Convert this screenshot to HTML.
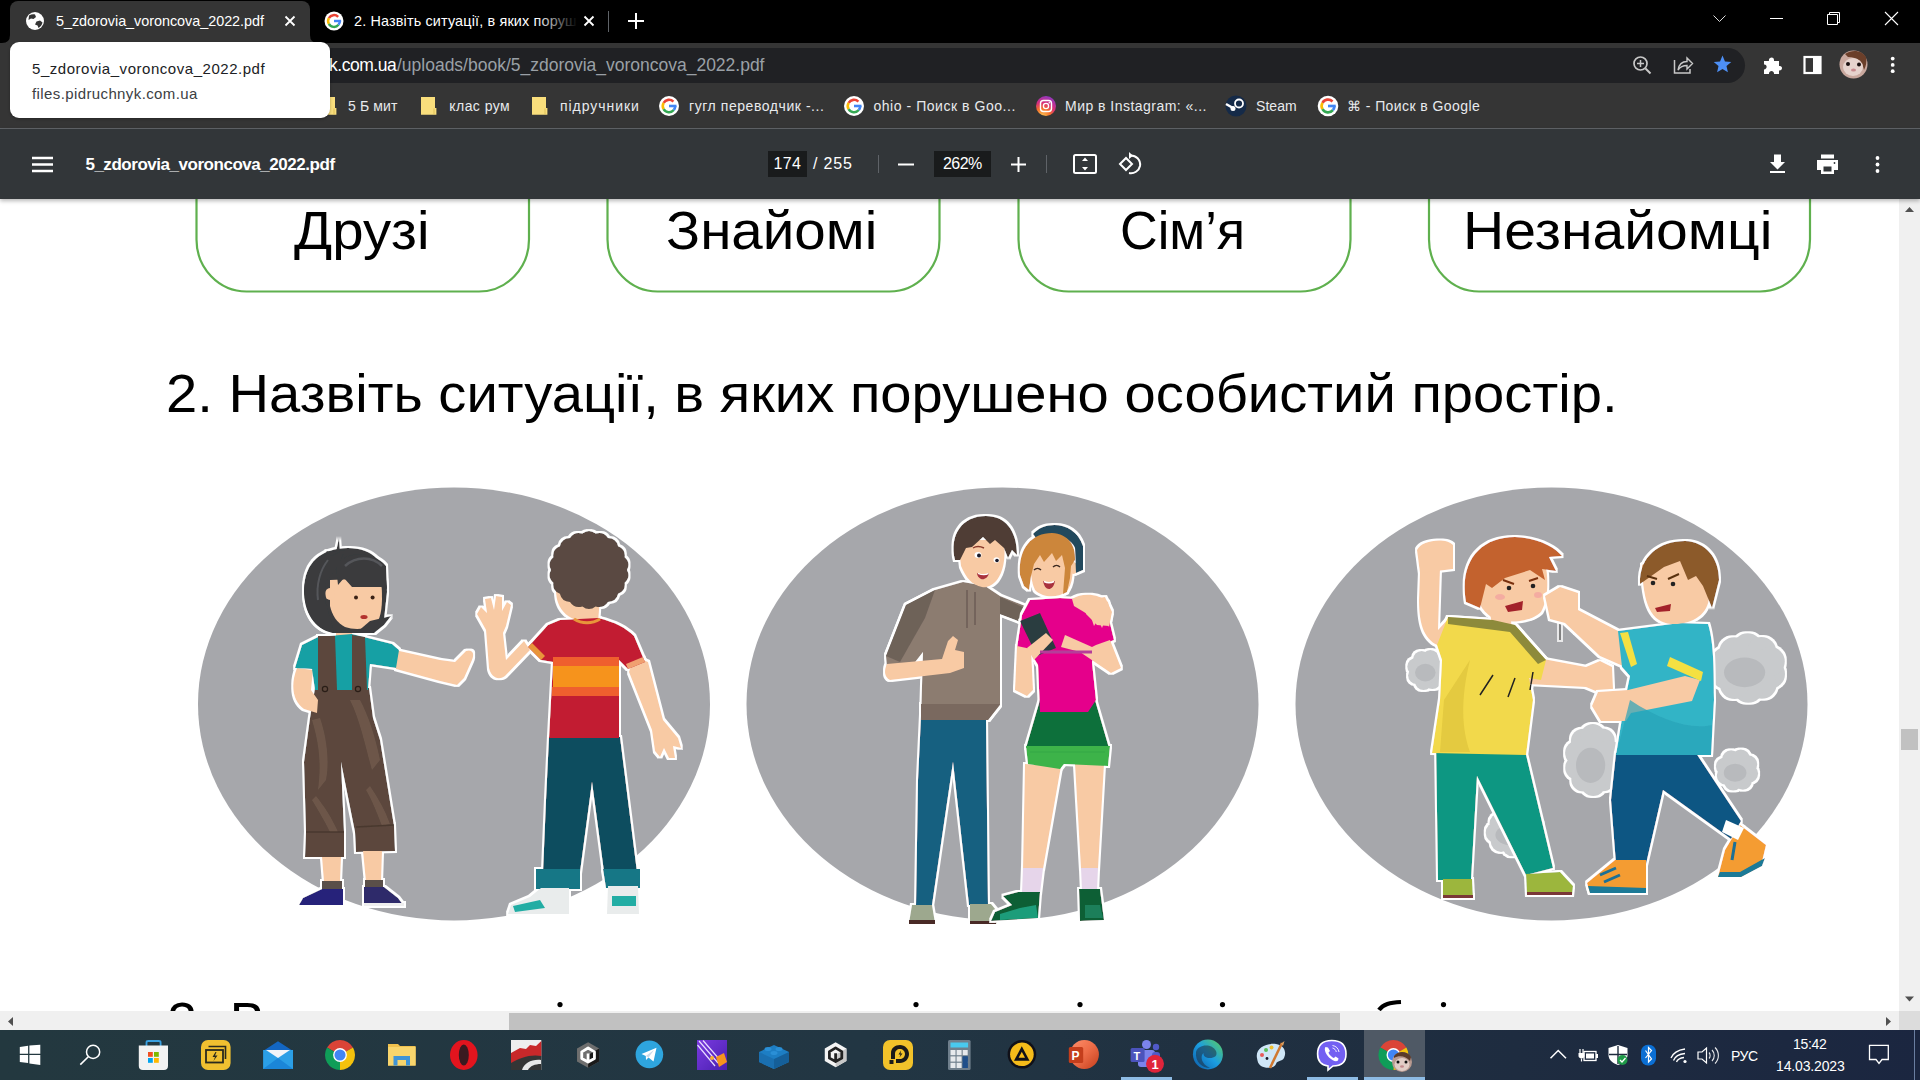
<!DOCTYPE html>
<html><head><meta charset="utf-8">
<style>
*{margin:0;padding:0;box-sizing:border-box}
html,body{width:1920px;height:1080px;overflow:hidden;background:#fff;font-family:"Liberation Sans",sans-serif}
.a{position:absolute}
.t{position:absolute;white-space:nowrap;line-height:1}
svg.s{position:absolute;left:0;top:0;overflow:visible}
</style></head><body>
<div class="a" style="left:0;top:0;width:1920px;height:43px;background:#000"></div>
<div class="a" style="left:10px;top:1px;width:300px;height:42px;background:#353535;border-radius:8px 8px 0 0"></div>
<svg class="s" width="400" height="50"><path d="M2 43 Q10 43 10 35 V43 Z M318 43 Q310 43 310 35 V43 Z" fill="#353535"/></svg>
<div class="a" style="left:0;top:43px;width:1920px;height:85px;background:#353535"></div>
<div class="a" style="left:0;top:128px;width:1920px;height:1px;background:#606468"></div>
<div class="a" style="left:100px;top:48px;width:1645px;height:35px;background:#202124;border-radius:18px"></div>
<div class="t" style="left:56.00px;top:13.61px;font-size:14.4px;font-weight:400;color:#fff;letter-spacing:-0.029px;font-family:'Liberation Sans',sans-serif;">5_zdorovia_voroncova_2022.pdf</div>
<div class="t" style="left:354.00px;top:13.61px;font-size:14.4px;font-weight:400;color:#fff;letter-spacing:0.156px;font-family:'Liberation Sans',sans-serif;">2. Назвіть ситуації, в яких поруш</div>
<div class="a" style="left:536px;top:8px;width:42px;height:28px;background:linear-gradient(90deg,rgba(0,0,0,0),#000)"></div>
<svg class="s" width="1920" height="200"><circle cx="35" cy="21" r="9" fill="#fff"/><path d="M29 15.5 C31 14.5 33 14 35 14.5 L36 17 L33.5 19 L31 18.5 L28.5 20 Z M36.5 21.5 L40 20.5 L42.5 22.5 C42 25 40.5 27 38.5 28 L37.5 25.5 L35 24.5 Z" fill="#353535"/><path d="M285.5 16.5 L294.5 25.5 M294.5 16.5 L285.5 25.5" stroke="#fff" stroke-width="1.8"/><circle cx="334" cy="21" r="9.5" fill="#fff"/><path d="M338.16 16.84 A5.89 5.89 0 0 0 328.90 18.05" stroke="#ea4335" stroke-width="2.47" fill="none"/><path d="M328.90 18.05 A5.89 5.89 0 0 0 328.90 23.95" stroke="#fbbc05" stroke-width="2.47" fill="none"/><path d="M328.90 23.95 A5.89 5.89 0 0 0 338.51 24.79" stroke="#34a853" stroke-width="2.47" fill="none"/><path d="M338.51 24.79 A5.89 5.89 0 0 0 339.89 21.00" stroke="#4285f4" stroke-width="2.47" fill="none"/><path d="M334 21 H341.125" stroke="#4285f4" stroke-width="2.47"/><path d="M584.5 16.5 L593.5 25.5 M593.5 16.5 L584.5 25.5" stroke="#fff" stroke-width="1.8"/><rect x="608" y="11" width="1" height="21" fill="#5f6368"/><path d="M628 21 H644 M636 13 V29" stroke="#fff" stroke-width="2"/><path d="M1713.5 15.5 L1719.5 21.5 L1725.5 15.5" stroke="#ddd" stroke-width="1" fill="none"/><path d="M1770 18.5 H1783" stroke="#fff" stroke-width="1"/><path d="M1827.5 14.5 H1837.5 V24.5 H1827.5 Z M1829.5 14.5 V12.5 H1839.5 V22.5 H1837.5" stroke="#fff" stroke-width="1" fill="none"/><path d="M1885 12 L1898 25 M1898 12 L1885 25" stroke="#fff" stroke-width="1.1"/><circle cx="1640.5" cy="63.5" r="6.5" stroke="#c8c8c8" stroke-width="1.7" fill="none"/><path d="M1645.5 68.5 L1650.5 73.5" stroke="#c8c8c8" stroke-width="2"/><path d="M1637 63.5 H1644 M1640.5 60 V67" stroke="#c8c8c8" stroke-width="1.5"/><path d="M1674.5 60 V73 H1690 V69" stroke="#c8c8c8" stroke-width="1.5" fill="none"/><path d="M1678 70 C1679 64 1683 61.5 1687 61.5 V58 L1692.5 63.5 L1687 69 V65.5 C1683 65.5 1680 67 1678 70 Z" stroke="#c8c8c8" stroke-width="1.4" fill="none"/><polygon points="1722.50,55.60 1724.97,61.40 1731.25,61.96 1726.49,66.10 1727.91,72.24 1722.50,69.00 1717.09,72.24 1718.51,66.10 1713.75,61.96 1720.03,61.40" fill="#4d8ff5"/><path d="M1764 61 H1769 C1768 57 1774 56 1774 60 V61 H1779 V66 C1783 65 1783 71 1779 70.5 V74 H1774 C1774.5 70 1768.5 70 1769 74 H1764 V69.5 C1767.5 69.5 1767.5 64 1764 64.5 Z" fill="#fff"/><rect x="1804.5" y="57" width="16" height="16" fill="none" stroke="#fff" stroke-width="2.2"/><rect x="1813" y="57" width="7.5" height="16" fill="#fff"/><circle cx="1853.5" cy="64.5" r="14" fill="#c9a89e"/><path d="M1845 54 C1852 49 1862 50 1866 57 C1867 62 1866 66 1864 70 C1863 63 1858 57 1848 57 Z" fill="#6b3f2a"/><ellipse cx="1853" cy="67" rx="10" ry="9" fill="#e6d3cd"/><circle cx="1848" cy="64" r="2" fill="#1a1010"/><circle cx="1859" cy="64.5" r="2" fill="#1a1010"/><ellipse cx="1853.5" cy="70" rx="2.5" ry="1.5" fill="#c88a8e"/><circle cx="1892.7" cy="58.6" r="1.9" fill="#fff"/><circle cx="1892.7" cy="64.9" r="1.9" fill="#fff"/><circle cx="1892.7" cy="71.2" r="1.9" fill="#fff"/><path d="M321 97 H335 V108 H336.4 V114.7 H321 Z" fill="#f9de7c"/><path d="M334 108.5 V114" stroke="#d8b850" stroke-width="0.8"/><path d="M421 97 H435 V108 H436.4 V114.7 H421 Z" fill="#f9de7c"/><path d="M434 108.5 V114" stroke="#d8b850" stroke-width="0.8"/><path d="M532 97 H546 V108 H547.4 V114.7 H532 Z" fill="#f9de7c"/><path d="M545 108.5 V114" stroke="#d8b850" stroke-width="0.8"/><circle cx="669" cy="106" r="10" fill="#fff"/><path d="M673.38 101.62 A6.2 6.2 0 0 0 663.63 102.90" stroke="#ea4335" stroke-width="2.6" fill="none"/><path d="M663.63 102.90 A6.2 6.2 0 0 0 663.63 109.10" stroke="#fbbc05" stroke-width="2.6" fill="none"/><path d="M663.63 109.10 A6.2 6.2 0 0 0 673.75 109.99" stroke="#34a853" stroke-width="2.6" fill="none"/><path d="M673.75 109.99 A6.2 6.2 0 0 0 675.20 106.00" stroke="#4285f4" stroke-width="2.6" fill="none"/><path d="M669 106 H676.5" stroke="#4285f4" stroke-width="2.6"/><circle cx="854" cy="106" r="10" fill="#fff"/><path d="M858.38 101.62 A6.2 6.2 0 0 0 848.63 102.90" stroke="#ea4335" stroke-width="2.6" fill="none"/><path d="M848.63 102.90 A6.2 6.2 0 0 0 848.63 109.10" stroke="#fbbc05" stroke-width="2.6" fill="none"/><path d="M848.63 109.10 A6.2 6.2 0 0 0 858.75 109.99" stroke="#34a853" stroke-width="2.6" fill="none"/><path d="M858.75 109.99 A6.2 6.2 0 0 0 860.20 106.00" stroke="#4285f4" stroke-width="2.6" fill="none"/><path d="M854 106 H861.5" stroke="#4285f4" stroke-width="2.6"/><circle cx="1328" cy="106" r="10.3" fill="#fff"/><path d="M1332.52 101.48 A6.386 6.386 0 0 0 1322.47 102.81" stroke="#ea4335" stroke-width="2.6780000000000004" fill="none"/><path d="M1322.47 102.81 A6.386 6.386 0 0 0 1322.47 109.19" stroke="#fbbc05" stroke-width="2.6780000000000004" fill="none"/><path d="M1322.47 109.19 A6.386 6.386 0 0 0 1332.89 110.10" stroke="#34a853" stroke-width="2.6780000000000004" fill="none"/><path d="M1332.89 110.10 A6.386 6.386 0 0 0 1334.39 106.00" stroke="#4285f4" stroke-width="2.6780000000000004" fill="none"/><path d="M1328 106 H1335.725" stroke="#4285f4" stroke-width="2.6780000000000004"/><defs><radialGradient id="ig" cx="0.3" cy="1.05" r="1.2"><stop offset="0" stop-color="#fdd15b"/><stop offset="0.35" stop-color="#f5702a"/><stop offset="0.6" stop-color="#d62e7a"/><stop offset="1" stop-color="#7a3bd6"/></radialGradient></defs><circle cx="1046" cy="106" r="10" fill="url(#ig)"/><rect x="1040.5" y="100.5" width="11" height="11" rx="3" fill="none" stroke="#fff" stroke-width="1.4"/><circle cx="1046" cy="106" r="2.6" fill="none" stroke="#fff" stroke-width="1.3"/><circle cx="1049.3" cy="102.8" r="0.8" fill="#fff"/><circle cx="1236" cy="106" r="10.5" fill="#152a48"/><path d="M1226 104 L1233 108" stroke="#fff" stroke-width="2.5"/><circle cx="1239" cy="103.5" r="4" fill="none" stroke="#fff" stroke-width="1.8"/><circle cx="1233" cy="108.5" r="2.5" fill="#fff"/></svg>
<div class="t" style="left:329.00px;top:57.19px;font-size:17.5px;font-weight:400;color:#fff;letter-spacing:-0.467px;font-family:'Liberation Sans',sans-serif;">k.com.ua</div>
<div class="t" style="left:397.00px;top:57.19px;font-size:17.5px;font-weight:400;color:#9aa0a6;letter-spacing:-0.007px;font-family:'Liberation Sans',sans-serif;">/uploads/book/5_zdorovia_voroncova_2022.pdf</div>
<div class="t" style="left:348.00px;top:99.05px;font-size:14px;font-weight:400;color:#e8eaed;letter-spacing:0.134px;font-family:'Liberation Sans',sans-serif;">5 Б мит</div>
<div class="t" style="left:449.30px;top:99.05px;font-size:14px;font-weight:400;color:#e8eaed;letter-spacing:0.443px;font-family:'Liberation Sans',sans-serif;">клас рум</div>
<div class="t" style="left:560.00px;top:99.05px;font-size:14px;font-weight:400;color:#e8eaed;letter-spacing:0.949px;font-family:'Liberation Sans',sans-serif;">підручники</div>
<div class="t" style="left:689.00px;top:99.05px;font-size:14px;font-weight:400;color:#e8eaed;letter-spacing:0.558px;font-family:'Liberation Sans',sans-serif;">гугл переводчик -...</div>
<div class="t" style="left:873.40px;top:99.05px;font-size:14px;font-weight:400;color:#e8eaed;letter-spacing:0.547px;font-family:'Liberation Sans',sans-serif;">ohio - Поиск в Goo...</div>
<div class="t" style="left:1065.00px;top:99.05px;font-size:14px;font-weight:400;color:#e8eaed;letter-spacing:0.471px;font-family:'Liberation Sans',sans-serif;">Мир в Instagram: «...</div>
<div class="t" style="left:1256.00px;top:99.05px;font-size:14px;font-weight:400;color:#e8eaed;letter-spacing:0.050px;font-family:'Liberation Sans',sans-serif;">Steam</div>
<div class="t" style="left:1347.00px;top:99.05px;font-size:14px;font-weight:400;color:#e8eaed;letter-spacing:0.423px;font-family:'Liberation Sans',sans-serif;">⌘ - Поиск в Google</div>
<div class="a" style="left:10px;top:42px;width:320px;height:76px;background:#fff;border-radius:9px;box-shadow:0 1px 3px rgba(0,0,0,.3)"></div>
<div class="t" style="left:32.00px;top:61.00px;font-size:15px;font-weight:400;color:#202124;letter-spacing:0.536px;font-family:'Liberation Sans',sans-serif;">5_zdorovia_voroncova_2022.pdf</div>
<div class="t" style="left:32.00px;top:86.00px;font-size:15px;font-weight:400;color:#3c4043;letter-spacing:0.391px;font-family:'Liberation Sans',sans-serif;">files.pidruchnyk.com.ua</div>
<div class="a" style="left:0;top:129px;width:1920px;height:70px;background:#323639;box-shadow:0 2px 4px rgba(0,0,0,.28);z-index:5"></div>
<svg class="s" width="1920" height="200" style="z-index:6"><path d="M32 158 H53 M32 164.5 H53 M32 171 H53" stroke="#fff" stroke-width="2.4"/><rect x="768" y="151" width="39" height="26" fill="#191b1c"/><rect x="934" y="151" width="57" height="26" fill="#191b1c"/><rect x="878" y="155" width="1" height="18" fill="#5f6368"/><rect x="1046" y="155" width="1" height="18" fill="#5f6368"/><path d="M898 164.5 H914" stroke="#fff" stroke-width="2"/><path d="M1011 164.5 H1026 M1018.5 157 V172" stroke="#fff" stroke-width="2"/><rect x="1074" y="155" width="22" height="18" rx="1.5" fill="none" stroke="#fff" stroke-width="2"/><path d="M1082 161 L1085 157.5 L1088 161 Z M1082 167 L1085 170.5 L1088 167 Z" fill="#fff"/><path d="M1120 164 L1126 158 L1132 164 L1126 170 Z" fill="none" stroke="#fff" stroke-width="2"/><path d="M1130 155.5 C1136 155 1141 160 1140 166 C1139 171 1134 174 1129 173" fill="none" stroke="#fff" stroke-width="2"/><path d="M1129 152 L1133 155.7 L1129 159 Z" fill="#fff"/><path d="M1774 154.5 H1781 V162 H1785 L1777.5 169.5 L1770 162 H1774 Z" fill="#fff"/><rect x="1770" y="171" width="15" height="2" fill="#fff"/><rect x="1821" y="154.5" width="13" height="4" fill="#fff"/><path d="M1817 160 H1838 V170 H1834 V174 H1821 V170 H1817 Z" fill="#fff"/><rect x="1823.5" y="166.5" width="8" height="5" fill="#323639"/><circle cx="1834.5" cy="163" r="0.9" fill="#323639"/><circle cx="1877.5" cy="158" r="1.9" fill="#fff"/><circle cx="1877.5" cy="164.5" r="1.9" fill="#fff"/><circle cx="1877.5" cy="171" r="1.9" fill="#fff"/></svg>
<div class="t" style="left:85.40px;top:155.61px;font-size:17px;font-weight:700;color:#fff;letter-spacing:-0.464px;font-family:'Liberation Sans',sans-serif;z-index:7">5_zdorovia_voroncova_2022.pdf</div>
<div class="t" style="left:773.60px;top:155.66px;font-size:16px;font-weight:400;color:#fff;letter-spacing:0.302px;font-family:'Liberation Sans',sans-serif;z-index:7">174</div>
<div class="t" style="left:813.00px;top:155.66px;font-size:16px;font-weight:400;color:#fff;letter-spacing:0.828px;font-family:'Liberation Sans',sans-serif;z-index:7">/ 255</div>
<div class="t" style="left:943.00px;top:155.66px;font-size:16px;font-weight:400;color:#fff;letter-spacing:-0.565px;font-family:'Liberation Sans',sans-serif;z-index:7">262%</div>
<div class="a" style="left:0;top:199px;width:1899px;height:812px;overflow:hidden">
<svg class="s" width="1899" height="812" style="top:0;left:0"><g transform="translate(0,-199)">
<rect x="196.5" y="140" width="332.5" height="151.5" rx="50" ry="52" fill="none" stroke="#5fb04e" stroke-width="2.2"/>
<rect x="607.5" y="140" width="332.0" height="151.5" rx="50" ry="52" fill="none" stroke="#5fb04e" stroke-width="2.2"/>
<rect x="1018.5" y="140" width="332.0" height="151.5" rx="50" ry="52" fill="none" stroke="#5fb04e" stroke-width="2.2"/>
<rect x="1429" y="140" width="381" height="151.5" rx="50" ry="52" fill="none" stroke="#5fb04e" stroke-width="2.2"/>
<ellipse cx="454" cy="704" rx="256" ry="216.5" fill="#a6a7ab"/>
<ellipse cx="1002.5" cy="704" rx="256" ry="216.5" fill="#a6a7ab"/>
<ellipse cx="1551.5" cy="704" rx="256" ry="216.5" fill="#a6a7ab"/>
<defs><filter id="ol" x="-20%" y="-20%" width="140%" height="140%"><feMorphology in="SourceAlpha" operator="dilate" radius="1.7" result="d"/><feFlood flood-color="#fff"/><feComposite in2="d" operator="in" result="w"/><feMerge><feMergeNode in="w"/><feMergeNode in="SourceGraphic"/></feMerge></filter></defs><g filter="url(#ol)"><path d="M530 650 L505 676 C498 681 491 677 489 668 L486 630 L477 614 L481 607 L487 613 L485 599 L491 598 L494 610 L496 596 L502 597 L502 611 L507 602 L511 605 L506 626 L503 633 L506 660 L524 641 Z" fill="#f8caa4"/><path d="M634 656 L648 662 L663 720 L678 738 L681 748 L673 746 L675 758 L669 758 L664 748 L660 757 L655 751 L652 730 L629 672 Z" fill="#f8caa4"/><path d="M549 737 L620 737 L637 872 L604 872 L592 782 L580 872 L543 872 L546 800 Z" fill="#0e4e5f"/><path d="M536 869 L580 869 L580 889 L536 889 Z M603 869 L640 869 L640 888 L606 888 Z" fill="#127786"/><path d="M541 888 L569 888 L569 914 L508 914 L511 905 L530 897 Z" fill="#e9ecec"/><path d="M608 886 L638 886 L639 914 L607 914 Z" fill="#e9ecec"/><path d="M556 590 C556 610 568 623 598 624 L600 596 Z" fill="#f8caa4"/><path d="M560 620 L598 618 C615 622 626 628 634 636 L645 662 L628 669 L619 660 L619 738 L549 738 L553 662 L541 660 L528 647 L548 625 Z" fill="#c21f30"/><path d="M627.0 570.0 Q630.9 577.2 624.7 582.7 Q625.8 590.8 618.1 593.8 Q616.3 601.8 608.0 602.0 Q603.5 609.0 595.6 606.4 Q589.0 611.5 582.4 606.4 Q574.5 609.0 570.0 602.0 Q561.7 601.8 559.9 593.8 Q552.2 590.8 553.3 582.7 Q547.1 577.2 551.0 570.0 Q547.1 562.8 553.3 557.3 Q552.2 549.2 559.9 546.2 Q561.7 538.2 570.0 538.0 Q574.5 531.0 582.4 533.6 Q589.0 528.5 595.6 533.6 Q603.5 531.0 608.0 538.0 Q616.3 538.2 618.1 546.2 Q625.8 549.2 624.7 557.3 Q630.9 562.8 627.0 570.0 Z" fill="#5a4a42"/><path d="M553 657 H619 V666 H553 Z" fill="#ef5e2e"/><path d="M553 666 H619 V687 H553 Z" fill="#f6931e"/><path d="M552 687 H619 V696 H552 Z" fill="#ef5e2e"/><path d="M513 906 L540 900 L545 908 L515 912 Z" fill="#22ada4"/><path d="M612 896 L636 896 L636 906 L612 906 Z" fill="#22ada4"/><path d="M528 647 L541 660 L545 656 L532 643 Z" fill="#e8953a"/><path d="M628 669 L645 662 L643 657 L626 664 Z" fill="#f0a070"/><path d="M574 619 C582 624 592 624 600 619" stroke="#e8953a" stroke-width="3" fill="none"/></g><g filter="url(#ol)"><path d="M315 688 L369 688 L373 718 L380 740 L394 826 L395 851 L356 852 L355 832 L341 762 L344 832 L344 857 L305 857 L306 832 L304 762 L310 718 Z" fill="#5b473c"/><path d="M322 857 L341 857 L340 882 L324 882 Z M363 851 L382 851 L381 882 L366 882 Z" fill="#f8caa4"/><path d="M322 881 L342 881 L342 890 L322 890 Z M365 880 L383 880 L383 889 L365 889 Z" fill="#5a5048"/><path d="M322 889 L343 889 L343 905 L299 905 L303 898 Z" fill="#28217a"/><path d="M364 887 L384 887 L398 898 L404 906 L364 906 Z" fill="#2f2a6a"/><path d="M297 668 L313 670 L311 690 L318 700 L317 713 L304 709 C293 701 290 686 297 668 Z" fill="#f8caa4"/><path d="M395 650 L440 660 L455 662 L466 651 C472 649 475 653 472 660 L464 678 L457 685 L440 681 L396 669 Z" fill="#f8caa4"/><path d="M336 622 L352 622 L352 640 L336 640 Z" fill="#f8caa4"/><path d="M318 637 L352 634 L392 644 L399 650 L396 668 L370 664 L368 690 L315 690 L312 669 L295 668 L302 645 Z" fill="#12a0a4"/><path d="M318 636 L335 636 L337 690 L318 690 Z M352 635 L365 637 L367 690 L352 690 Z" fill="#5b473c"/><path d="M304 590 C304 562 322 548 348 548 C373 548 387 562 387 592 L384 620 L374 633 L333 633 C314 629 304 612 304 590 Z" fill="#3a3b3e"/><path d="M330 580 L381 578 C383 600 382 613 378 621 C372 629 356 631 345 627 C337 623 332 615 330 606 Z" fill="#f8caa4"/><ellipse cx="330" cy="594" rx="5" ry="6" fill="#f8caa4"/><path d="M304 590 C306 565 322 551 345 550 L338 566 C332 575 326 580 325 586 L326 604 L334 631 L333 633 C314 629 304 612 304 590 Z" fill="#3a3b3e"/><path d="M336 566 C344 552 372 549 386 566 L387 589 L381 587 L352 587 L344 578 L338 585 Z" fill="#3a3b3e"/><path d="M370 621 L391 616 L384 625 L374 633 L356 633 Z" fill="#3a3b3e"/><circle cx="356" cy="597.6" r="2" fill="#3a2418"/><circle cx="372.6" cy="597.6" r="2" fill="#3a2418"/><ellipse cx="364" cy="617" rx="3.6" ry="2" fill="#b3322e"/><circle cx="325" cy="689" r="2.6" fill="none" stroke="#2a1e18" stroke-width="1.2"/><circle cx="358" cy="689" r="2.6" fill="none" stroke="#2a1e18" stroke-width="1.2"/><path d="M312 720 C318 740 322 760 318 790 L326 780 C330 760 326 735 320 718 Z M350 700 C360 720 365 745 372 770 L380 760 C375 735 368 715 360 700 Z M366 790 C372 800 378 815 382 826 L390 824 C385 810 378 798 370 786 Z M312 800 C318 810 324 820 330 832 L338 832 C332 818 324 806 316 796 Z" fill="#6d574a"/><path d="M306 832 L344 832 M356 827 L394 825" stroke="#4a392f" stroke-width="1.5"/><path d="M364 903 L404 903 L404 906 L364 906 Z" fill="#eee"/><path d="M345 566 C356 556 372 556 382 566" stroke="#55565a" stroke-width="2.5" fill="none"/><path d="M328 560 C320 570 316 585 318 600" stroke="#55565a" stroke-width="2" fill="none"/><path d="M331 556 L326 551 L336 552 L339 538 L340 552 Z" fill="#3a3b3e"/></g><g filter="url(#ol)"><path d="M921 716 L986 716 L988 905 L969 905 L953 762 L932 905 L916 905 L918 780 Z" fill="#166080"/><path d="M912 905 L932 905 L935 923 L909 923 Z" fill="#9da88e"/><path d="M970 904 L991 904 L1001 916 L996 924 L970 924 Z" fill="#9da88e"/><path d="M935 590 L963 582 L985 586 L1000 596 L1040 612 L1034 626 L1000 614 L1000 705 L988 720 L921 720 L923 652 L912 666 L887 668 L886 656 L906 605 Z" fill="#8c7b70"/><path d="M887 664 L942 659 L948 641 L953 636 L958 640 L955 650 L964 652 L964 668 L950 673 L890 680 C884 677 884 670 887 664 Z" fill="#f8caa4"/><path d="M958 540 L1004 540 C1006 560 1003 572 997 580 C992 586 986 588 982 587 C972 585 966 578 961 566 Z" fill="#f8caa4"/><ellipse cx="960.5" cy="553" rx="4.5" ry="7" fill="#f8caa4"/><path d="M955 560 C949 535 962 516 986 516 C1005 516 1017 530 1017 555 L1012 550 L1008 558 L1004 548 L995 540 L990 544 L983 537 L972 547 L966 548 L960 560 Z" fill="#4f3e35"/><path d="M935 590 L906 605 L886 656 L900 662 L925 618 Z" fill="#6e6259"/><path d="M1000 597 L1034 612 L1028 625 L1000 614 Z" fill="#6e6259"/><path d="M921 704 L1000 704 L988 720 L921 720 Z" fill="#7a695e"/><ellipse cx="978" cy="555" rx="3.5" ry="3" fill="#fff"/><circle cx="979" cy="555.5" r="2" fill="#1a1a2a"/><ellipse cx="996.5" cy="560" rx="3" ry="2.8" fill="#fff"/><circle cx="997" cy="560.5" r="1.8" fill="#1a1a2a"/><path d="M973 548 C976 546 980 546 984 548" stroke="#8a3a2a" stroke-width="1.5" fill="none"/><path d="M977 573 C981 575 986 575 989 573 C988 578 984 580 981 579 C979 578 977 576 977 573 Z" fill="#a8303e"/><path d="M978 573.5 C982 575 986 575 988.5 573.5" stroke="#fff" stroke-width="1.3" fill="none"/><path d="M967 590 L967 628 M975 592 L975 625" stroke="#6e6058" stroke-width="1.6"/><path d="M969 904 L991 904 L991 908 L969 908 Z" fill="#777f6e" opacity="0"/><path d="M909 920 L935 920 L935 924 L909 924 Z M970 921 L996 921 L996 924 L970 924 Z" fill="#4a2a28"/></g><g filter="url(#ol)"><path d="M1025 764 L1061 766 L1043 869 L1023 869 Z M1075 764 L1104 764 L1098 869 L1081 869 Z" fill="#f8caa4"/><path d="M1023 868 L1043 868 L1040 893 L1022 893 Z M1081 868 L1098 868 L1097 891 L1082 891 Z" fill="#e6d5ea"/><path d="M1018 892 L1040 892 L1038 918 L991 921 L995 912 L1012 905 L1003 896 Z" fill="#0d5e36"/><path d="M1079 889 L1100 889 L1104 920 L1080 921 Z" fill="#0d5e36"/><path d="M1040 700 L1095 700 L1109 748 L1026 748 Z" fill="#0f6f3a"/><path d="M1026 746 L1110 746 L1108 766 L1064 764 L1060 769 L1028 764 Z" fill="#3cb34a"/><path d="M1030 600 L1060 598 L1095 600 L1108 615 L1114 640 L1095 648 L1092 662 L1096 700 L1088 712 L1040 712 L1038 665 L1030 652 L1017 648 L1022 615 Z" fill="#e5058b"/><path d="M1017 646 L1031 649 L1033 690 L1027 696 L1015 690 Z" fill="#f8caa4"/><path d="M1096 645 L1110 640 L1121 668 L1111 673 L1080 652 L1061 647 L1065 635 L1092 647 Z" fill="#f8caa4"/><path d="M1087 600 L1105 597 L1112 612 L1109 626 L1097 625 L1086 614 Z" fill="#f8caa4"/><path d="M1020 621 L1040 613 L1056 648 L1037 656 Z" fill="#2c3c3f"/><path d="M1027 648 L1046 633 L1053 640 L1034 660 Z" fill="#f8caa4"/><path d="M1031 553 L1072 550 C1074 570 1073 585 1066 592 C1058 598 1042 598 1035 590 C1031 582 1030 570 1031 553 Z" fill="#f8caa4"/><ellipse cx="1073.5" cy="568" rx="4" ry="6" fill="#f8caa4"/><path d="M1033 534 C1045 520 1075 521 1083 546 L1083 570 L1076 573 L1075 548 C1070 536 1050 531 1036 538 Z" fill="#214a5d"/><path d="M1020 575 C1018 548 1032 533 1052 533 C1068 534 1076 545 1075 560 L1071 566 L1070 578 L1067 592 L1063 594 L1065 568 L1062 555 L1056 561 L1052 553 L1044 562 L1040 555 L1034 564 L1031 576 L1029 590 L1024 586 Z" fill="#cc863a"/><path d="M1072 599 C1082 592 1100 594 1108 602 L1111 615 L1109 627 L1105 620 L1102 628 L1098 619 L1094 626 L1091 617 L1084 612 L1074 606 Z" fill="#f8caa4"/><path d="M1034 570 C1036 568 1039 568 1041 570 M1053 567 C1055 565 1058 565 1060 567" stroke="#3a2a20" stroke-width="1.4" fill="none"/><path d="M1043 581 C1047 583 1051 583 1055 581 C1054 587 1051 589 1049 589 C1046 589 1044 586 1043 581 Z" fill="#a8303e"/><path d="M1044 581.5 C1047 583 1051 583 1054 581.5" stroke="#fff" stroke-width="1.4" fill="none"/><path d="M1040 652 L1092 652" stroke="#b53c9a" stroke-width="3"/><path d="M1030 752 L1105 752" stroke="#2e9a40" stroke-width="1" opacity="0.5"/><path d="M1000 914 L1020 908 L1036 905 L1038 918 L1000 920 Z" fill="#1f9d7a"/><path d="M1085 905 L1100 905 L1103 918 L1085 918 Z" fill="#1a7f5a"/></g><g filter="url(#ol)"><ellipse cx="1427" cy="670" rx="13.8" ry="14.1" fill="#c8cacc"/><circle cx="1438.1" cy="673.5" r="8.6" fill="#c8cacc"/><circle cx="1432.4" cy="680.5" r="8.6" fill="#c8cacc"/><circle cx="1423.6" cy="681.3" r="8.6" fill="#c8cacc"/><circle cx="1416.7" cy="675.5" r="8.6" fill="#c8cacc"/><circle cx="1415.9" cy="666.5" r="8.6" fill="#c8cacc"/><circle cx="1421.6" cy="659.5" r="8.6" fill="#c8cacc"/><circle cx="1430.4" cy="658.7" r="8.6" fill="#c8cacc"/><circle cx="1437.3" cy="664.5" r="8.6" fill="#c8cacc"/><ellipse cx="1425.3" cy="672.6" rx="10.3" ry="8.8" fill="#b8babd"/><ellipse cx="1593" cy="760" rx="19.5" ry="28.2" fill="#c8cacc"/><circle cx="1608.7" cy="767.0" r="12.2" fill="#c8cacc"/><circle cx="1602.9" cy="779.0" r="12.2" fill="#c8cacc"/><circle cx="1593.2" cy="783.8" r="12.2" fill="#c8cacc"/><circle cx="1583.5" cy="779.4" r="12.2" fill="#c8cacc"/><circle cx="1577.4" cy="767.7" r="12.2" fill="#c8cacc"/><circle cx="1577.3" cy="753.0" r="12.2" fill="#c8cacc"/><circle cx="1583.1" cy="741.0" r="12.2" fill="#c8cacc"/><circle cx="1592.8" cy="736.2" r="12.2" fill="#c8cacc"/><circle cx="1602.5" cy="740.6" r="12.2" fill="#c8cacc"/><circle cx="1608.6" cy="752.3" r="12.2" fill="#c8cacc"/><ellipse cx="1590.6" cy="765.3" rx="14.6" ry="17.6" fill="#b8babd"/><ellipse cx="1515" cy="832" rx="22.4" ry="16.6" fill="#c8cacc"/><circle cx="1533.1" cy="836.1" r="10.4" fill="#c8cacc"/><circle cx="1525.2" cy="843.8" r="10.4" fill="#c8cacc"/><circle cx="1512.6" cy="845.9" r="10.4" fill="#c8cacc"/><circle cx="1501.1" cy="841.5" r="10.4" fill="#c8cacc"/><circle cx="1496.1" cy="832.7" r="10.4" fill="#c8cacc"/><circle cx="1499.9" cy="823.5" r="10.4" fill="#c8cacc"/><circle cx="1510.8" cy="818.3" r="10.4" fill="#c8cacc"/><circle cx="1523.6" cy="819.5" r="10.4" fill="#c8cacc"/><circle cx="1532.4" cy="826.6" r="10.4" fill="#c8cacc"/><ellipse cx="1512.2" cy="835.1" rx="16.8" ry="10.4" fill="#b8babd"/><ellipse cx="1748" cy="668" rx="27.5" ry="23.7" fill="#c8cacc"/><circle cx="1770.2" cy="673.9" r="14.8" fill="#c8cacc"/><circle cx="1761.9" cy="684.0" r="14.8" fill="#c8cacc"/><circle cx="1748.3" cy="688.0" r="14.8" fill="#c8cacc"/><circle cx="1734.6" cy="684.3" r="14.8" fill="#c8cacc"/><circle cx="1726.0" cy="674.4" r="14.8" fill="#c8cacc"/><circle cx="1725.8" cy="662.1" r="14.8" fill="#c8cacc"/><circle cx="1734.1" cy="652.0" r="14.8" fill="#c8cacc"/><circle cx="1747.7" cy="648.0" r="14.8" fill="#c8cacc"/><circle cx="1761.4" cy="651.7" r="14.8" fill="#c8cacc"/><circle cx="1770.0" cy="661.6" r="14.8" fill="#c8cacc"/><ellipse cx="1744.6" cy="672.4" rx="20.6" ry="14.8" fill="#b8babd"/><ellipse cx="1737" cy="770" rx="15.0" ry="14.4" fill="#c8cacc"/><circle cx="1749.1" cy="773.6" r="9.0" fill="#c8cacc"/><circle cx="1742.9" cy="780.7" r="9.0" fill="#c8cacc"/><circle cx="1733.2" cy="781.6" r="9.0" fill="#c8cacc"/><circle cx="1725.8" cy="775.7" r="9.0" fill="#c8cacc"/><circle cx="1724.9" cy="766.4" r="9.0" fill="#c8cacc"/><circle cx="1731.1" cy="759.3" r="9.0" fill="#c8cacc"/><circle cx="1740.8" cy="758.4" r="9.0" fill="#c8cacc"/><circle cx="1748.2" cy="764.3" r="9.0" fill="#c8cacc"/><ellipse cx="1735.1" cy="772.7" rx="11.3" ry="9.0" fill="#b8babd"/></g><g filter="url(#ol)"><path d="M1436 742 L1523 742 L1553 868 L1526 875 L1477 776 L1471 880 L1438 880 Z" fill="#0f9782"/><path d="M1443 879 L1472 879 L1473 898 L1443 898 Z" fill="#9cb63d"/><path d="M1526 874 L1560 872 L1573 886 L1572 895 L1527 895 Z" fill="#9cb63d"/><path d="M1420 572 L1440 568 L1438 630 L1450 617 L1456 640 L1440 646 C1425 641 1419 626 1419 600 Z" fill="#f8caa4"/><path d="M1417 550 C1421 540 1446 537 1453 545 L1453 569 L1420 573 Z" fill="#f8caa4"/><path d="M1538 658 L1586 667 L1600 661 L1612 667 L1613 689 L1598 692 L1586 687 L1527 684 Z" fill="#f8caa4"/><path d="M1448 617 L1493 620 L1515 625 L1546 660 L1541 680 L1529 678 L1533 700 L1526 755 L1432 753 L1440 700 L1442 660 L1437 645 Z" fill="#f2d94b"/><path d="M1490 610 L1510 612 L1512 630 L1492 628 Z" fill="#f8caa4"/><path d="M1476 578 L1530 552 L1545 562 C1549 580 1548 600 1541 612 C1531 622 1506 625 1491 617 C1481 610 1474 598 1476 578 Z" fill="#f8caa4"/><circle cx="1473" cy="591" r="6.5" fill="#f8caa4"/><path d="M1466 602 C1459 562 1480 537 1515 537 C1540 538 1555 548 1562 556 L1549 557 L1556 571 L1542 569 L1545 580 L1530 570 L1505 578 L1492 588 L1486 584 L1480 608 Z" fill="#c3622d"/><path d="M1448 617 L1493 620 L1515 625 L1546 660 L1538 664 L1510 632 L1448 624 Z" fill="#8d8a3a"/><path d="M1470 660 C1460 700 1462 730 1470 752 L1440 752 L1444 700 Z" fill="#e0c53c" opacity="0.8"/><circle cx="1509" cy="588" r="2.3" fill="#222"/><circle cx="1533" cy="586" r="2.3" fill="#222"/><path d="M1503 580 L1514 584 M1529 581 L1538 578" stroke="#7a3010" stroke-width="2"/><path d="M1505 606 L1523 601 L1522 610 L1508 612 Z" fill="#a3222a"/><ellipse cx="1500" cy="597" rx="5" ry="3" fill="#f2a0a0" opacity="0.7"/><ellipse cx="1538" cy="595" rx="4" ry="3" fill="#f2a0a0" opacity="0.7"/><path d="M1480 695 L1493 675 M1508 697 L1515 678 M1530 690 L1533 672 M1560 640 L1560 622 M1576 633 L1578 617" stroke="#222" stroke-width="1.5"/><path d="M1443 895 L1473 895 L1473 898 L1443 898 Z M1527 892 L1572 892 L1572 895 L1527 895 Z" fill="#7a3838"/></g><g filter="url(#ol)"><path d="M1616 753 L1696 753 L1727 800 L1741 821 L1731 839 L1663 790 L1646 864 L1616 864 L1611 800 Z" fill="#0d5683"/><path d="M1615 860 L1646 860 L1646 893 L1590 893 L1587 883 Z" fill="#f49c33"/><path d="M1740 825 L1766 845 L1761 866 L1741 877 L1718 877 L1725 850 Z" fill="#f49c33"/><path d="M1726 820 L1744 828 L1738 840 L1722 832 Z" fill="#fff"/><path d="M1545 596 L1560 587 L1578 593 L1578 610 L1620 632 L1623 666 L1600 656 L1565 623 L1550 619 Z" fill="#f8caa4"/><path d="M1618 631 L1680 623 L1708 624 C1713 640 1714 660 1714 700 L1711 755 L1616 755 L1625 700 L1630 676 L1622 667 Z" fill="#33b4c6"/><path d="M1685 676 L1700 680 L1692 701 L1631 713 L1626 721 L1601 721 L1592 706 L1598 692 L1628 690 Z" fill="#f8caa4"/><path d="M1642 565 L1665 552 L1700 558 L1709 596 C1709 615 1691 625 1671 624 C1651 622 1643 605 1642 565 Z" fill="#f8caa4"/><circle cx="1707" cy="590" r="6.5" fill="#f8caa4"/><path d="M1640 584 C1639 556 1660 541 1685 541 C1706 542 1719 558 1719 580 L1712 608 L1703 586 L1696 576 L1688 580 L1680 561 L1664 567 Z" fill="#8c5a2c"/><path d="M1620 633 L1628 632 L1637 664 L1631 667 Z" fill="#f4e043"/><path d="M1670 657 L1703 672 L1701 681 L1667 666 Z" fill="#f4e043"/><path d="M1630 700 C1660 720 1690 730 1712 725 L1711 755 L1616 755 Z" fill="#2aa3b8" opacity="0.7"/><circle cx="1653" cy="583" r="2.3" fill="#222"/><circle cx="1673" cy="584" r="2.3" fill="#222"/><path d="M1647 576 L1657 579 M1668 579 L1679 574" stroke="#5a3010" stroke-width="2"/><path d="M1655 608 L1671 604 L1670 611 L1657 612 Z" fill="#a3222a"/><path d="M1590 893 L1646 893 L1646 888 L1588 886 Z M1718 877 L1741 877 L1762 866 L1765 858 L1740 872 L1720 872 Z" fill="#1a7a97"/><path d="M1600 875 L1616 868 M1604 882 L1620 875 M1735 842 L1732 860" stroke="#1a6f96" stroke-width="3"/></g>
<circle cx="560" cy="1004.6" r="2.6" fill="#000"/>
<circle cx="916" cy="1004.6" r="2.6" fill="#000"/>
<circle cx="1080" cy="1004.6" r="2.6" fill="#000"/>
<circle cx="1222.5" cy="1004.6" r="2.6" fill="#000"/>
<circle cx="1443.5" cy="1004.6" r="2.6" fill="#000"/>
<path d="M1379 1010 C1383 1004 1390 1002.5 1401 1002" stroke="#000" stroke-width="4.2" fill="none"/>
</g></svg>
<div class="t" style="left:293.70px;top:4.29px;font-size:54px;font-weight:400;color:#000;letter-spacing:0.000px;font-family:'Liberation Sans',sans-serif;transform:scaleX(1.0437);transform-origin:0 0;">Друзі</div>
<div class="t" style="left:665.95px;top:4.29px;font-size:54px;font-weight:400;color:#000;letter-spacing:0.000px;font-family:'Liberation Sans',sans-serif;transform:scaleX(1.0466);transform-origin:0 0;">Знайомі</div>
<div class="t" style="left:1120.07px;top:4.29px;font-size:54px;font-weight:400;color:#000;letter-spacing:0.000px;font-family:'Liberation Sans',sans-serif;transform:scaleX(0.9668);transform-origin:0 0;">Сім’я</div>
<div class="t" style="left:1462.77px;top:4.29px;font-size:54px;font-weight:400;color:#000;letter-spacing:0.000px;font-family:'Liberation Sans',sans-serif;transform:scaleX(1.0570);transform-origin:0 0;">Незнайомці</div>
<div class="t" style="left:166.48px;top:168.34px;font-size:53px;font-weight:400;color:#000;letter-spacing:0.000px;font-family:'Liberation Sans',sans-serif;transform:scaleX(1.0600);transform-origin:0 0;">2. Назвіть ситуації, в яких порушено особистий простір.</div>
<div class="t" style="left:167.40px;top:796.34px;font-size:53px;font-weight:400;color:#000;letter-spacing:0.000px;font-family:'Liberation Sans',sans-serif;SCALE">3.</div>
<div class="t" style="left:229.75px;top:796.34px;font-size:53px;font-weight:400;color:#000;letter-spacing:0.000px;font-family:'Liberation Sans',sans-serif;SCALE">В</div>
</div>
<div class="a" style="left:1899px;top:199px;width:21px;height:812px;background:#f0f0f0"></div>
<svg class="s" width="1920" height="1080"><path d="M1905 212 L1914 212 L1909.5 207 Z" fill="#505050"/><path d="M1905 996.5 L1914 996.5 L1909.5 1001.5 Z" fill="#505050"/><path d="M13 1017 L13 1026 L8 1021.5 Z" fill="#505050"/><path d="M1886 1017 L1886 1026 L1891 1021.5 Z" fill="#505050"/></svg>
<div class="a" style="left:0;top:1011px;width:1899px;height:19px;background:#f0f0f0"></div>
<div class="a" style="left:509px;top:1013px;width:831px;height:17px;background:#c1c1c1"></div>
<div class="a" style="left:1899px;top:1011px;width:21px;height:19px;background:#dcdcdc"></div>
<div class="a" style="left:1901px;top:729px;width:17px;height:21px;background:#c1c1c1"></div>
<svg class="s" width="1920" height="1080"><path d="M13 1017 L13 1026 L8 1021.5 Z" fill="#505050"/><path d="M1886 1017 L1886 1026 L1891 1021.5 Z" fill="#505050"/></svg>
<div class="a" style="left:0;top:1030px;width:1920px;height:50px;background:linear-gradient(90deg,#23383f 0%,#223643 45%,#1f2e40 72%,#1b2640 100%)"></div>
<div class="a" style="left:1364px;top:1030px;width:61px;height:50px;background:#4f5965"></div>
<div class="a" style="left:1121px;top:1077px;width:51px;height:3px;background:#8dbbe4"></div>
<div class="a" style="left:1307px;top:1077px;width:51px;height:3px;background:#8dbbe4"></div>
<div class="a" style="left:1364px;top:1077px;width:61px;height:3px;background:#8dbbe4"></div>
<div class="a" style="left:1914px;top:1030px;width:1px;height:50px;background:#6a7ea0"></div>
<svg class="s" width="1920" height="1080"><path d="M19.8 1046.9 L28.1 1045.8 V1053.7 H19.8 Z M29.4 1045.6 L40.3 1044.8 V1053.7 H29.4 Z M19.8 1055 H28.1 V1063.1 L19.8 1062 Z M29.4 1055 H40.3 V1065 L29.4 1063.6 Z" fill="#fff"/><circle cx="93.1" cy="1051.9" r="6.6" fill="none" stroke="#fff" stroke-width="1.5"/><path d="M88.3 1056.8 L80.3 1064.6" stroke="#fff" stroke-width="1.6"/><path d="M146.5 1046 V1042.5 C146.5 1041.3 147.3 1041 148.3 1041 H158.8 C159.8 1041 160.6 1041.3 160.6 1042.5 V1046" fill="none" stroke="#3aa0e0" stroke-width="1.8"/><path d="M138.8 1045.5 H168 V1066 C168 1068.5 166.5 1070 164 1070 H142.8 C140.3 1070 138.8 1068.5 138.8 1066 Z" fill="#f3f3f3"/><rect x="148" y="1052" width="4.8" height="4.8" fill="#f25022"/><rect x="154" y="1052" width="4.8" height="4.8" fill="#7fba00"/><rect x="148" y="1058" width="4.8" height="4.8" fill="#00a4ef"/><rect x="154" y="1058" width="4.8" height="4.8" fill="#ffb900"/><rect x="201" y="1040" width="29.6" height="30" rx="7" fill="#f0c030"/><path d="M208.5 1046.5 H225.5 V1059" fill="none" stroke="#2a2a1e" stroke-width="1.6"/><rect x="206" y="1050" width="17" height="12.5" fill="none" stroke="#2a2a1e" stroke-width="1.8"/><path d="M215.5 1052 L212.5 1057 H215 L213.5 1061 L217.5 1055.5 H215 L216.5 1052 Z" fill="#2a2a1e"/><path d="M263.1 1051 L278 1041.3 L293 1051 Z" fill="#1366c2"/><rect x="263.1" y="1050" width="29.9" height="19" fill="#2b9fe6"/><path d="M266 1050 H290 L278 1058 Z" fill="#f0f4f8"/><path d="M263.1 1069 L278 1058 L293 1069 Z" fill="#1b86d8"/><path d="M340 1055 L327.01 1047.50 A15 15 0 0 1 352.99 1047.50 Z" fill="#db4437"/><path d="M340 1055 L352.99 1047.50 A15 15 0 0 1 340.00 1070.00 Z" fill="#f4c20d"/><path d="M340 1055 L340.00 1070.00 A15 15 0 0 1 327.01 1047.50 Z" fill="#0f9d58"/><circle cx="340" cy="1055" r="6.9" fill="#fff"/><circle cx="340" cy="1055" r="5.55" fill="#4285f4"/><path d="M388 1044 H398 L400 1046 H415.6 V1065.6 H388 Z" fill="#f0c14d"/><rect x="388" y="1047" width="27.6" height="18.6" fill="#f8d56c"/><path d="M393.5 1056 H410 V1065.6 H406 V1060 H397.5 V1065.6 H393.5 Z" fill="#3f94d6"/><ellipse cx="463.8" cy="1055" rx="13.8" ry="15" fill="#e3141e"/><ellipse cx="463.8" cy="1055" rx="5" ry="10.5" fill="#3a1a20"/><rect x="511" y="1040" width="30.3" height="30" fill="#eeeeee"/><path d="M511 1053 L520 1048 L526 1049 L530 1045 L536 1046 L541.3 1041 V1056 L530 1060 L518 1064 L511 1066 Z" fill="#c8282a"/><path d="M511 1063 C520 1058 530 1054 541.3 1056 V1070 H511 Z" fill="#353535"/><path d="M522 1070 C524 1063 532 1059 541 1060 V1064 C535 1064 530 1066 528 1070 Z" fill="#e8e8e8"/><polygon points="588.10,1042.20 599.19,1048.60 599.19,1061.40 588.10,1067.80 577.01,1061.40 577.01,1048.60" fill="#6e6e6e"/><polygon points="588.1,1055 599.18,1048.60 599.18,1061.40 588.1,1067.8" fill="#1a1a1a"/><path d="M588.1 1047.96 L594.44 1051.83 V1058.52 L588.1 1062.04 L581.76 1058.52 V1051.83 Z M588.1 1053.59 V1062.04" fill="none" stroke="#ffffff" stroke-width="2.82" stroke-linejoin="round"/><circle cx="649.4" cy="1054.4" r="13.8" fill="#2ea5de"/><path d="M641.5 1054 L656.5 1047.8 L653.5 1061.5 L648.5 1057.5 L646 1060 L645.8 1056 Z" fill="#fff"/><path d="M645.8 1056 L654 1050 L648.5 1057.5 Z" fill="#c8daea"/><defs><linearGradient id="pg" x1="0" y1="0" x2="1" y2="1"><stop offset="0" stop-color="#7a3be0"/><stop offset="1" stop-color="#4a1fb0"/></linearGradient></defs><rect x="697" y="1040" width="30" height="30" fill="url(#pg)"/><path d="M699 1041 L718 1063 M697.5 1045 L715 1066 M703 1040.5 L720 1060" stroke="#e8dcff" stroke-width="1.2"/><path d="M716 1057 L724 1053 L727 1062 L719 1067 Z" fill="#f7941d"/><circle cx="712" cy="1058" r="2" fill="#f7b030"/><path d="M759 1052 L774 1045 L789 1052 V1062 L774 1069 L759 1062 Z" fill="#1d7ec4"/><path d="M774 1059 L789 1052 V1062 L774 1069 Z" fill="#155f99"/><path d="M759 1052 L774 1059 V1069 L759 1062 Z" fill="#1a6fb0"/><ellipse cx="768" cy="1049" rx="3.5" ry="2" fill="#2a8fd6"/><ellipse cx="779" cy="1049" rx="3.5" ry="2" fill="#2a8fd6"/><ellipse cx="774" cy="1053" rx="3.5" ry="2" fill="#2a8fd6"/><polygon points="835.60,1042.20 846.43,1048.45 846.43,1060.95 835.60,1067.20 824.77,1060.95 824.77,1048.45" fill="#f4f4f4"/><polygon points="835.6,1054.7 846.43,1048.45 846.43,1060.95 835.6,1067.2" fill="#c8c8c8"/><path d="M835.6 1047.825 L841.79 1051.61 V1058.14 L835.6 1061.575 L829.41 1058.14 V1051.61 Z M835.6 1053.33 V1061.58" fill="none" stroke="#222222" stroke-width="2.75" stroke-linejoin="round"/><rect x="883" y="1040" width="30" height="30" rx="7" fill="#f2c22a"/><path d="M891 1059 V1053 C891 1048 895 1045 900 1045 C905 1045 909 1049 909 1054 C909 1059 905 1063 900 1063 H896 V1059 H900 C902.5 1059 905 1057 905 1054 C905 1051 902.5 1049 900 1049 C897 1049 895 1051 895 1054 V1059 Z" fill="#1a1a1a"/><rect x="889.5" y="1060" width="4" height="4" fill="#1a1a1a"/><path d="M901 1050.5 L898.5 1054.5 H900.5 L899.5 1057.5 L902.5 1053.5 H900.5 Z" fill="#1a1a1a"/><rect x="948" y="1040" width="22.6" height="30" rx="1.5" fill="#6f7f8c"/><rect x="950.5" y="1042.5" width="17.6" height="5" fill="#49c9ee"/><rect x="950.5" y="1050.0" width="5" height="5.2" fill="#e6e9ec"/><rect x="956.6" y="1050.0" width="5" height="5.2" fill="#e6e9ec"/><rect x="962.7" y="1050.0" width="5" height="5.2" fill="#e6e9ec"/><rect x="950.5" y="1056.4" width="5" height="5.2" fill="#e6e9ec"/><rect x="956.6" y="1056.4" width="5" height="5.2" fill="#e6e9ec"/><rect x="962.7" y="1056.4" width="5" height="5.2" fill="#1f4f8a"/><rect x="950.5" y="1062.8" width="5" height="5.2" fill="#e6e9ec"/><rect x="956.6" y="1062.8" width="5" height="5.2" fill="#e6e9ec"/><rect x="962.7" y="1062.8" width="5" height="5.2" fill="#1f4f8a"/><rect x="962.7" y="1056.4" width="5" height="11.6" fill="#1f4f8a"/><circle cx="1021.9" cy="1054.3" r="14.3" fill="#101018"/><circle cx="1021.9" cy="1054.3" r="11.8" fill="#f5bb1a"/><path d="M1021.8 1046.3 L1029.5 1060.8 H1014 Z" fill="#101018"/><path d="M1021.8 1051.8 L1025 1057.8 H1018.6 Z" fill="#f5bb1a"/><defs><linearGradient id="ppg" x1="0" y1="0" x2="1" y2="1"><stop offset="0" stop-color="#ff8f6b"/><stop offset="0.5" stop-color="#ed6c47"/><stop offset="1" stop-color="#c43e1c"/></linearGradient></defs><circle cx="1084.4" cy="1054.4" r="14.5" fill="url(#ppg)"/><rect x="1068.8" y="1047" width="14.4" height="16" rx="1.5" fill="#c43e1c"/><text x="1071.5" y="1060" font-family="Liberation Sans" font-weight="700" font-size="12" fill="#fff">P</text><circle cx="1146.5" cy="1044.5" r="4.5" fill="#7b83eb"/><circle cx="1156" cy="1047" r="3.2" fill="#5059c9"/><rect x="1138" y="1050" width="17" height="17" rx="3" fill="#7b83eb"/><rect x="1152" y="1052" width="8" height="10" rx="3" fill="#5059c9"/><rect x="1130.6" y="1048" width="14" height="14" rx="1.5" fill="#4b53bc"/><text x="1133.5" y="1059.5" font-family="Liberation Sans" font-weight="700" font-size="11" fill="#fff">T</text><circle cx="1155" cy="1063.8" r="9" fill="#e0243b"/><text x="1151.5" y="1068.6" font-family="Liberation Sans" font-weight="700" font-size="13" fill="#fff">1</text><defs><linearGradient id="eg" x1="0" y1="1" x2="1" y2="0"><stop offset="0" stop-color="#0c59a4"/><stop offset="0.5" stop-color="#1b9de2"/><stop offset="1" stop-color="#5ed05a"/></linearGradient></defs><circle cx="1207.9" cy="1054.4" r="15" fill="url(#eg)"/><path d="M1196 1052 C1198 1044 1212 1043 1216 1051 C1218 1056 1214 1058 1210 1058 C1206 1058 1203 1056 1203.5 1053 C1200 1056 1201 1064 1210 1068 C1202 1068 1195 1062 1196 1052 Z" fill="#1e2b3e" opacity="0.55"/><path d="M1257 1058 C1255 1048 1266 1043 1276 1044 C1284 1045 1287 1052 1284 1058 C1282 1062 1277 1060 1276 1064 C1275 1068 1266 1069 1261 1066 C1258 1064 1257.5 1061 1257 1058 Z" fill="#cfe6f7"/><circle cx="1262" cy="1055" r="2" fill="#e85a5a"/><circle cx="1266" cy="1050" r="2" fill="#5cc05c"/><circle cx="1271.5" cy="1047.5" r="2" fill="#f0c030"/><circle cx="1267" cy="1058.5" r="1.4" fill="#1a1a2a"/><path d="M1270 1068 L1282 1043" stroke="#d07830" stroke-width="2.5"/><path d="M1281 1043.5 L1284.5 1041 L1283 1046 Z" fill="#e0a060"/><path d="M1331.8 1040.5 C1341 1040.5 1346 1045 1346 1054 C1346 1062 1341 1066 1333 1066 L1328 1070 V1066 C1321 1065 1317.6 1061 1317.6 1054 C1317.6 1045 1322 1040.5 1331.8 1040.5 Z" fill="#7360f2" stroke="#fff" stroke-width="1.6"/><path d="M1325.5 1047 C1324 1049 1325 1053 1329 1057.5 C1333 1061 1336 1062 1338 1060.5 L1338.5 1058.5 L1335.5 1056.5 L1334 1058 C1332 1057.5 1329 1054.5 1328.5 1052.5 L1330 1051 L1328 1047.5 Z" fill="#fff"/><path d="M1332.5 1045.5 C1336 1046 1338.5 1048.5 1339 1052 M1332.5 1048 C1334.5 1048.5 1336 1050 1336.3 1052" stroke="#fff" stroke-width="0.9" fill="none"/><path d="M1393.4 1055 L1380.41 1047.50 A15 15 0 0 1 1406.39 1047.50 Z" fill="#db4437"/><path d="M1393.4 1055 L1406.39 1047.50 A15 15 0 0 1 1393.40 1070.00 Z" fill="#f4c20d"/><path d="M1393.4 1055 L1393.40 1070.00 A15 15 0 0 1 1380.41 1047.50 Z" fill="#0f9d58"/><circle cx="1393.4" cy="1055" r="6.9" fill="#fff"/><circle cx="1393.4" cy="1055" r="5.55" fill="#4285f4"/><circle cx="1402" cy="1062" r="10" fill="#b99a90"/><path d="M1394 1056 C1398 1050 1408 1051 1411 1057 L1410 1061 C1406 1056 1399 1055 1394 1058 Z" fill="#5a3a2a"/><ellipse cx="1402" cy="1064.5" rx="7.5" ry="6.5" fill="#e2cdc6"/><circle cx="1398" cy="1062" r="1.5" fill="#111"/><circle cx="1406" cy="1062" r="1.5" fill="#111"/><ellipse cx="1402" cy="1066.5" rx="2" ry="1.2" fill="#c48a8e"/><path d="M1550.5 1058.3 L1558.2 1050.5 L1566 1058.3" fill="none" stroke="#fff" stroke-width="1.5"/><path d="M1580 1049 V1053 M1583 1049 V1053" stroke="#fff" stroke-width="1.2"/><path d="M1578.5 1053 H1584.5 V1056 C1584.5 1057.5 1583 1058.5 1581.5 1058.5 C1580 1058.5 1578.5 1057.5 1578.5 1056 Z" fill="#fff"/><path d="M1581.5 1058.5 V1061.5" stroke="#fff" stroke-width="1.2"/><rect x="1584" y="1051.5" width="12" height="9" fill="none" stroke="#fff" stroke-width="1.3"/><rect x="1586" y="1053.5" width="8" height="5" fill="#fff"/><rect x="1596" y="1054" width="2" height="4" fill="#fff"/><path d="M1618 1045 L1627.5 1048 V1055 C1627.5 1060 1623 1063.5 1618 1065 C1613 1063.5 1608.5 1060 1608.5 1055 V1048 Z" fill="#fff"/><path d="M1618 1046 V1064 M1609 1054.5 H1627" stroke="#1e2b3c" stroke-width="1.4"/><circle cx="1622.5" cy="1060" r="5" fill="#1f9a48"/><path d="M1620 1060 L1622 1062 L1625.5 1058" stroke="#fff" stroke-width="1.3" fill="none"/><rect x="1641" y="1044.8" width="15" height="20.8" rx="7" fill="#0b6fd4"/><path d="M1645.5 1050.5 L1651.5 1059 L1648.5 1062 V1047.5 L1651.5 1050.5 L1645.5 1058" fill="none" stroke="#fff" stroke-width="1.2"/><path d="M1671 1058 C1673 1053 1678 1050 1685 1049 M1673.5 1060.5 C1675 1056.5 1679 1054 1685 1053.5 M1676.5 1062 C1677.5 1059.5 1680 1058 1684 1057.5" fill="none" stroke="#fff" stroke-width="1.3"/><circle cx="1685" cy="1061.5" r="1.6" fill="#fff"/><path d="M1698 1052 H1702 L1706.5 1048 V1063 L1702 1059 H1698 Z" fill="none" stroke="#fff" stroke-width="1.2"/><path d="M1709 1052.5 C1710.5 1054 1710.5 1057 1709 1058.5 M1712 1050 C1715 1053 1715 1058 1712 1061 M1715 1047.5 C1719.5 1052 1719.5 1059 1715 1063.5" fill="none" stroke="#fff" stroke-width="1.1" opacity="0.9"/><path d="M1869.5 1045.3 H1888.3 V1059.5 H1882 L1879 1063.5 L1876 1059.5 H1869.5 Z" fill="none" stroke="#fff" stroke-width="1.3"/></svg>
<div class="t" style="left:1731.00px;top:1048.55px;font-size:14px;font-weight:400;color:#fff;letter-spacing:-0.462px;font-family:'Liberation Sans',sans-serif;">РУС</div>
<div class="t" style="left:1793.00px;top:1037.15px;font-size:14px;font-weight:400;color:#fff;letter-spacing:-0.312px;font-family:'Liberation Sans',sans-serif;">15:42</div>
<div class="t" style="left:1776.00px;top:1059.45px;font-size:14px;font-weight:400;color:#fff;letter-spacing:-0.142px;font-family:'Liberation Sans',sans-serif;">14.03.2023</div>
</body></html>
